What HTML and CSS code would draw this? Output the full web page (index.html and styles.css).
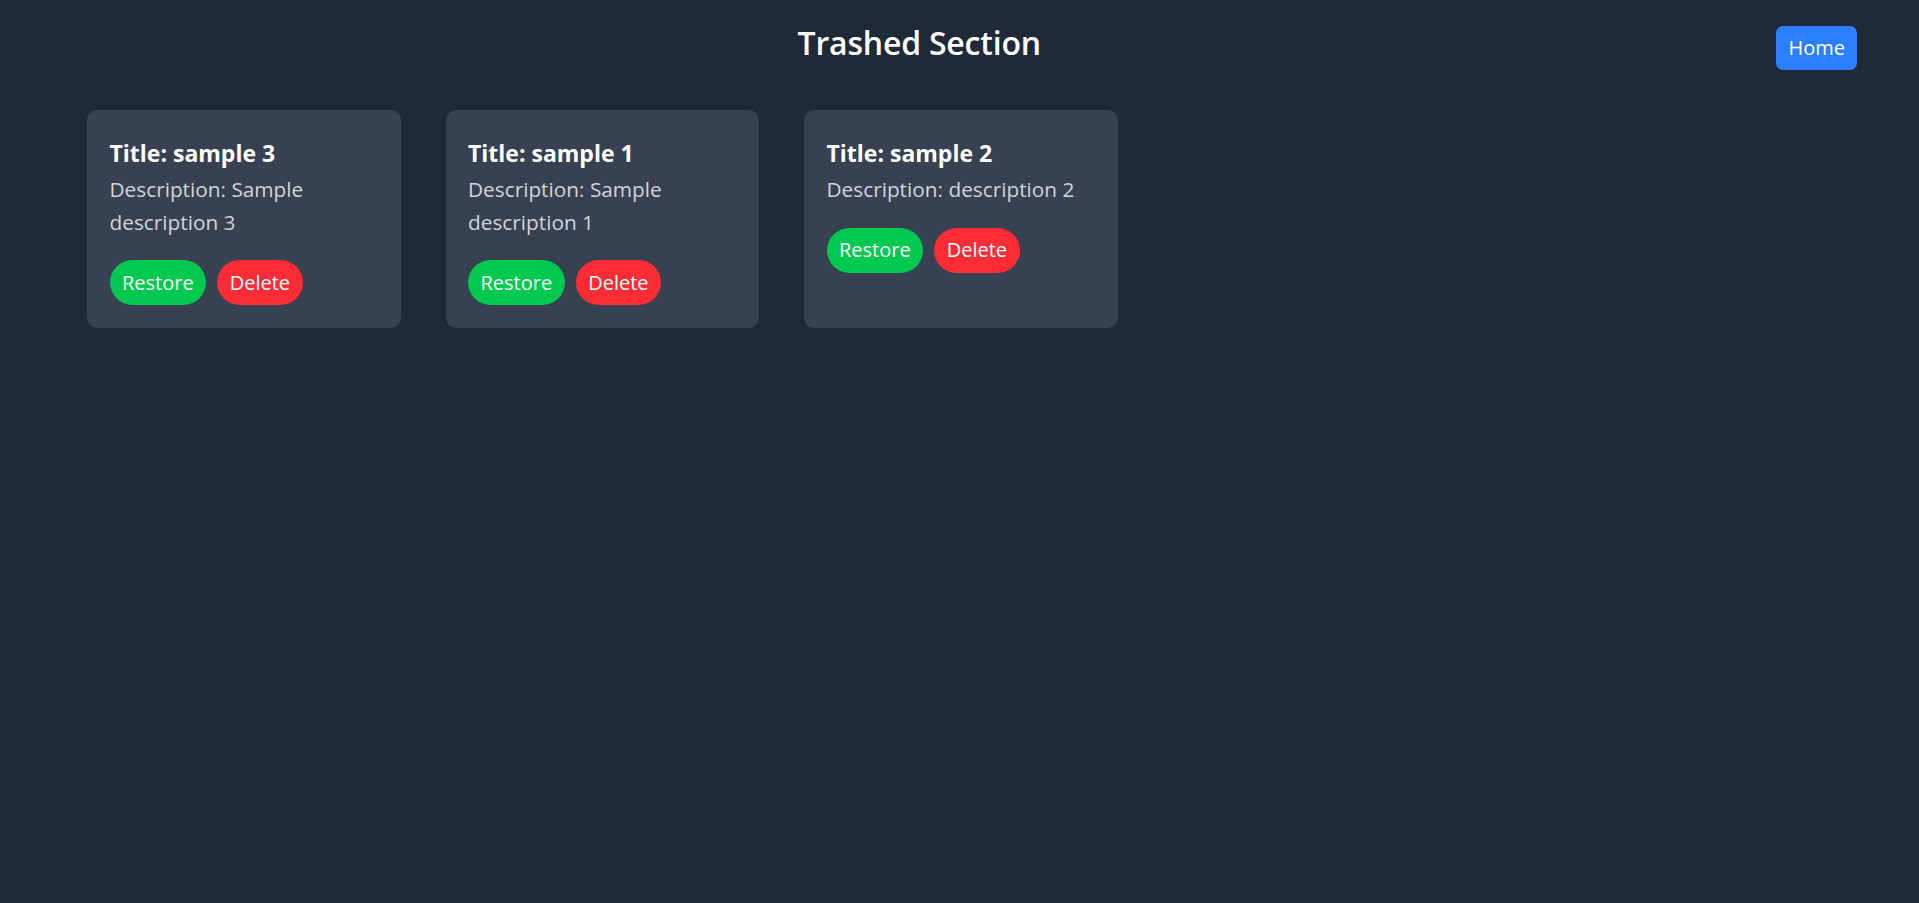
FILE: index.html
```html
<!DOCTYPE html>
<html lang="en">
<head>
<meta charset="utf-8">
<title>Trashed Section</title>
<link rel="stylesheet" href="styles.css">
</head>
<body>
<header class="topbar">
  <h1 class="page-title">Trashed Section</h1>
  <button class="home-btn">Home</button>
</header>
<main class="card-grid">
  <article class="card">
    <h2 class="card-title">Title: sample 3</h2>
    <p class="card-desc">Description: Sample description 3</p>
    <div class="card-actions">
      <button class="pill restore">Restore</button>
      <button class="pill delete">Delete</button>
    </div>
  </article>
  <article class="card">
    <h2 class="card-title">Title: sample 1</h2>
    <p class="card-desc">Description: Sample description 1</p>
    <div class="card-actions">
      <button class="pill restore">Restore</button>
      <button class="pill delete">Delete</button>
    </div>
  </article>
  <article class="card">
    <h2 class="card-title">Title: sample 2</h2>
    <p class="card-desc">Description: description 2</p>
    <div class="card-actions">
      <button class="pill restore">Restore</button>
      <button class="pill delete">Delete</button>
    </div>
  </article>
</main>
</body>
</html>
```

FILE: styles.css
```css
* { box-sizing: border-box; }
html, body {
  margin: 0;
  padding: 0;
  background: #1f2937;
  min-height: 100%;
}
body {
  font-family: "Open Sans", "Noto Sans", sans-serif;
  color: #ffffff;
  min-height: 903px;
}
.topbar {
  display: flex;
  align-items: flex-start;
  padding: 20px 62px 0 62px;
}
.page-title {
  flex: 1;
  margin: 0;
  text-align: center;
  font-size: 32px;
  line-height: 45px;
  font-weight: 600;
  letter-spacing: -0.2px;
}
.home-btn {
  margin-top: 6px;
  font-family: inherit;
  font-size: 20px;
  line-height: 30px;
  padding: 7px 12px;
  color: #fff;
  background: #2b7fff;
  border: none;
  border-radius: 7px;
}
.card-grid {
  display: flex;
  gap: 45px;
  padding: 0 87px;
  margin-top: 40px;
}
.card {
  width: 313.5px;
  background: #374151;
  border-radius: 10px;
  padding: 22.5px;
}
.card-title {
  margin: 0;
  font-size: 23px;
  line-height: 40.5px;
  font-weight: 700;
}
.card-desc {
  margin: 0;
  font-size: 20.8px;
  line-height: 32.5px;
  color: #d1d5db;
}
.card-actions {
  display: flex;
  gap: 11px;
  margin-top: 22px;
}
.pill {
  font-family: inherit;
  font-size: 20px;
  line-height: 30px;
  padding: 7.5px 12.5px;
  color: #fff;
  border: none;
  border-radius: 999px;
}
.restore { background: #00c950; }
.delete { background: #fb2c36; }
```
